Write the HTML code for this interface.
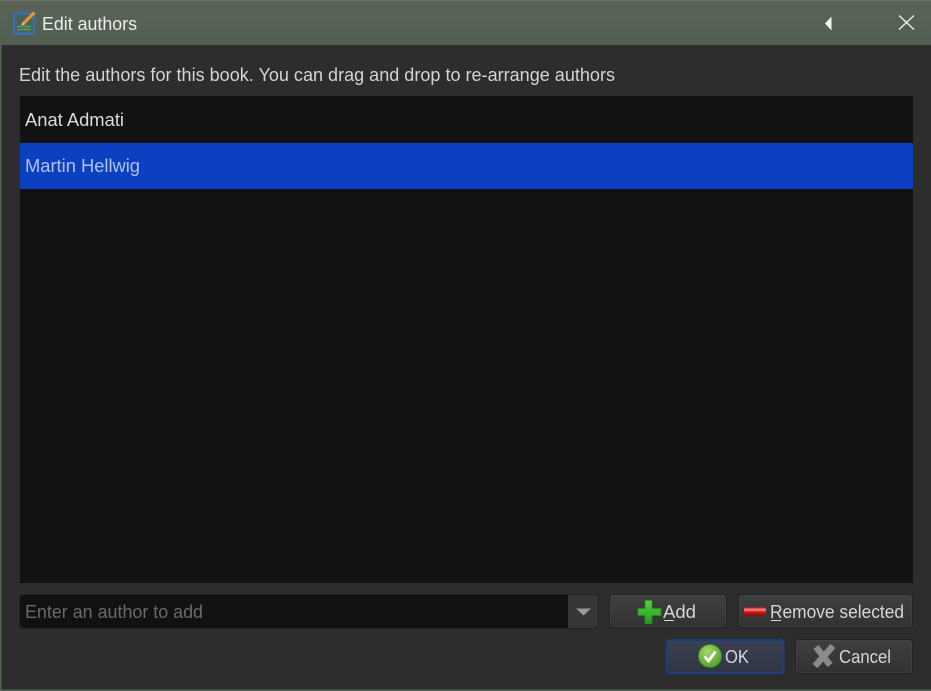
<!DOCTYPE html>
<html><head><meta charset="utf-8"><title>Edit authors</title>
<style>
html,body{margin:0;padding:0;width:931px;height:691px;overflow:hidden;background:#2d2d2d}
svg{display:block}
text{font-family:"Liberation Sans",sans-serif;font-size:18px}
</style></head><body>
<svg width="931" height="691" viewBox="0 0 931 691" xmlns="http://www.w3.org/2000/svg">
<defs>
<linearGradient id="tb" x1="0" y1="0" x2="0" y2="1"><stop offset="0" stop-color="#5a6558"/><stop offset="1" stop-color="#525d51"/></linearGradient>
<linearGradient id="btn" x1="0" y1="0" x2="0" y2="1"><stop offset="0" stop-color="#3f3f3f"/><stop offset="1" stop-color="#323232"/></linearGradient>
<linearGradient id="ok" x1="0" y1="0" x2="0" y2="1"><stop offset="0" stop-color="#3c4150"/><stop offset="1" stop-color="#2f3545"/></linearGradient>
<radialGradient id="gc" cx=".4" cy=".3" r=".8"><stop offset="0" stop-color="#a5d86a"/><stop offset="1" stop-color="#4c9a22"/></radialGradient>
<linearGradient id="pl" x1="0" y1="0" x2="0" y2="1"><stop offset="0" stop-color="#58d040"/><stop offset="1" stop-color="#1f9a1f"/></linearGradient>
<linearGradient id="mi" x1="0" y1="0" x2="0" y2="1"><stop offset="0" stop-color="#d82020"/><stop offset=".3" stop-color="#f09090"/><stop offset=".55" stop-color="#d81818"/><stop offset="1" stop-color="#8e0808"/></linearGradient>
</defs>
<rect width="931" height="691" fill="#2d2d2d"/>
<rect x="0" y="0" width="931" height="45" fill="url(#tb)"/>
<rect x="0" y="0" width="931" height="1" fill="#6a7568"/>
<rect x="0" y="45" width="1.5" height="646" fill="#566155"/>
<rect x="0" y="689.5" width="931" height="1.5" fill="#566155"/>

<!-- title icon -->
<rect x="14" y="13.5" width="20" height="20" rx="2" fill="#4d5f5e" stroke="#3a70ad" stroke-width="2.4"/>
<path d="M17 26.5h14M17 29.5h14" stroke="#4fa35a" stroke-width="1.4"/>
<path d="M23 24L34.5 12.5" stroke="#e8952a" stroke-width="3.2"/>
<path d="M21.5 25.5l1-3 2 2z" fill="#f2d9a0"/>
<text x="42" y="30" fill="#ececec" textLength="95" lengthAdjust="spacingAndGlyphs">Edit authors</text>
<path d="M831.5 16.5v14l-6.5-7z" fill="#f4f4f4"/>
<path d="M899 15.500L914 29.500M914 15.500L899 29.500" stroke="#f2f2f2" stroke-width="1.3" fill="none"/>

<text x="19" y="81" fill="#d4d4d4" textLength="596" lengthAdjust="spacingAndGlyphs">Edit the authors for this book. You can drag and drop to re-arrange authors</text>

<!-- list -->
<rect x="20" y="96" width="893" height="487" fill="#121212"/>
<text x="25" y="126" fill="#dcdcdc" textLength="99" lengthAdjust="spacingAndGlyphs">Anat Admati</text>
<rect x="20" y="143" width="893" height="46" fill="#0d40c0"/>
<text x="25" y="172" fill="#b0c3ef" textLength="115" lengthAdjust="spacingAndGlyphs">Martin Hellwig</text>

<!-- combo -->
<rect x="19.500" y="594.500" width="579" height="34" rx="3" fill="#363636" stroke="#242424"/>
<path d="M23 595h545v33H23a3 3 0 0 1-3-3V598a3 3 0 0 1 3-3z" fill="#111"/>
<path d="M576 608.500h15l-7.500 7z" fill="#9a9a9a"/>
<text x="25" y="618" fill="#6a6a6a" textLength="178" lengthAdjust="spacingAndGlyphs">Enter an author to add</text>

<!-- Add -->
<rect x="609.500" y="594.500" width="117" height="33" rx="3" fill="url(#btn)" stroke="#222"/>
<rect x="610.500" y="595.500" width="115" height="31" rx="2" fill="none" stroke="#4a4a4a" stroke-opacity=".6"/>
<path d="M645 600.500h7v8h9v7h-9v8h-7v-8h-7v-7h7z" fill="url(#pl)" stroke="#2e8a24" stroke-width=".8"/>
<text x="663" y="618" fill="#d6d6d6" textLength="33" lengthAdjust="spacingAndGlyphs">Add</text>
<rect x="664" y="620" width="10" height="1" fill="#d6d6d6"/>

<!-- Remove -->
<rect x="738.500" y="594.500" width="174" height="33" rx="3" fill="url(#btn)" stroke="#222"/>
<rect x="739.500" y="595.500" width="172" height="31" rx="2" fill="none" stroke="#4a4a4a" stroke-opacity=".6"/>
<rect x="744" y="607.500" width="22" height="8" rx="2" fill="url(#mi)"/>
<text x="770" y="618" fill="#d6d6d6" textLength="134" lengthAdjust="spacingAndGlyphs">Remove selected</text>
<rect x="771" y="620" width="10" height="1" fill="#d6d6d6"/>

<!-- OK -->
<rect x="666.500" y="640" width="117" height="33" rx="3" fill="url(#ok)" stroke="#1d3d85" stroke-width="2"/>
<circle cx="710" cy="656" r="11.500" fill="url(#gc)" stroke="#3f8a1c" stroke-width=".8"/>
<path d="M704.500 656.500l4 4.500 7-9.500" fill="none" stroke="#fff" stroke-width="2.800"/>
<text x="725" y="663" fill="#d6d6d6" textLength="24" lengthAdjust="spacingAndGlyphs">OK</text>

<!-- Cancel -->
<rect x="795.500" y="639.500" width="117" height="34" rx="3" fill="url(#btn)" stroke="#222"/>
<rect x="796.500" y="640.500" width="115" height="32" rx="2" fill="none" stroke="#4a4a4a" stroke-opacity=".6"/>
<path d="M816 647L830 665M833 646L815 666" stroke="#8a8a8a" stroke-width="6.500" fill="none"/>
<text x="839" y="663" fill="#d6d6d6" textLength="52" lengthAdjust="spacingAndGlyphs">Cancel</text>
</svg>
</body></html>
